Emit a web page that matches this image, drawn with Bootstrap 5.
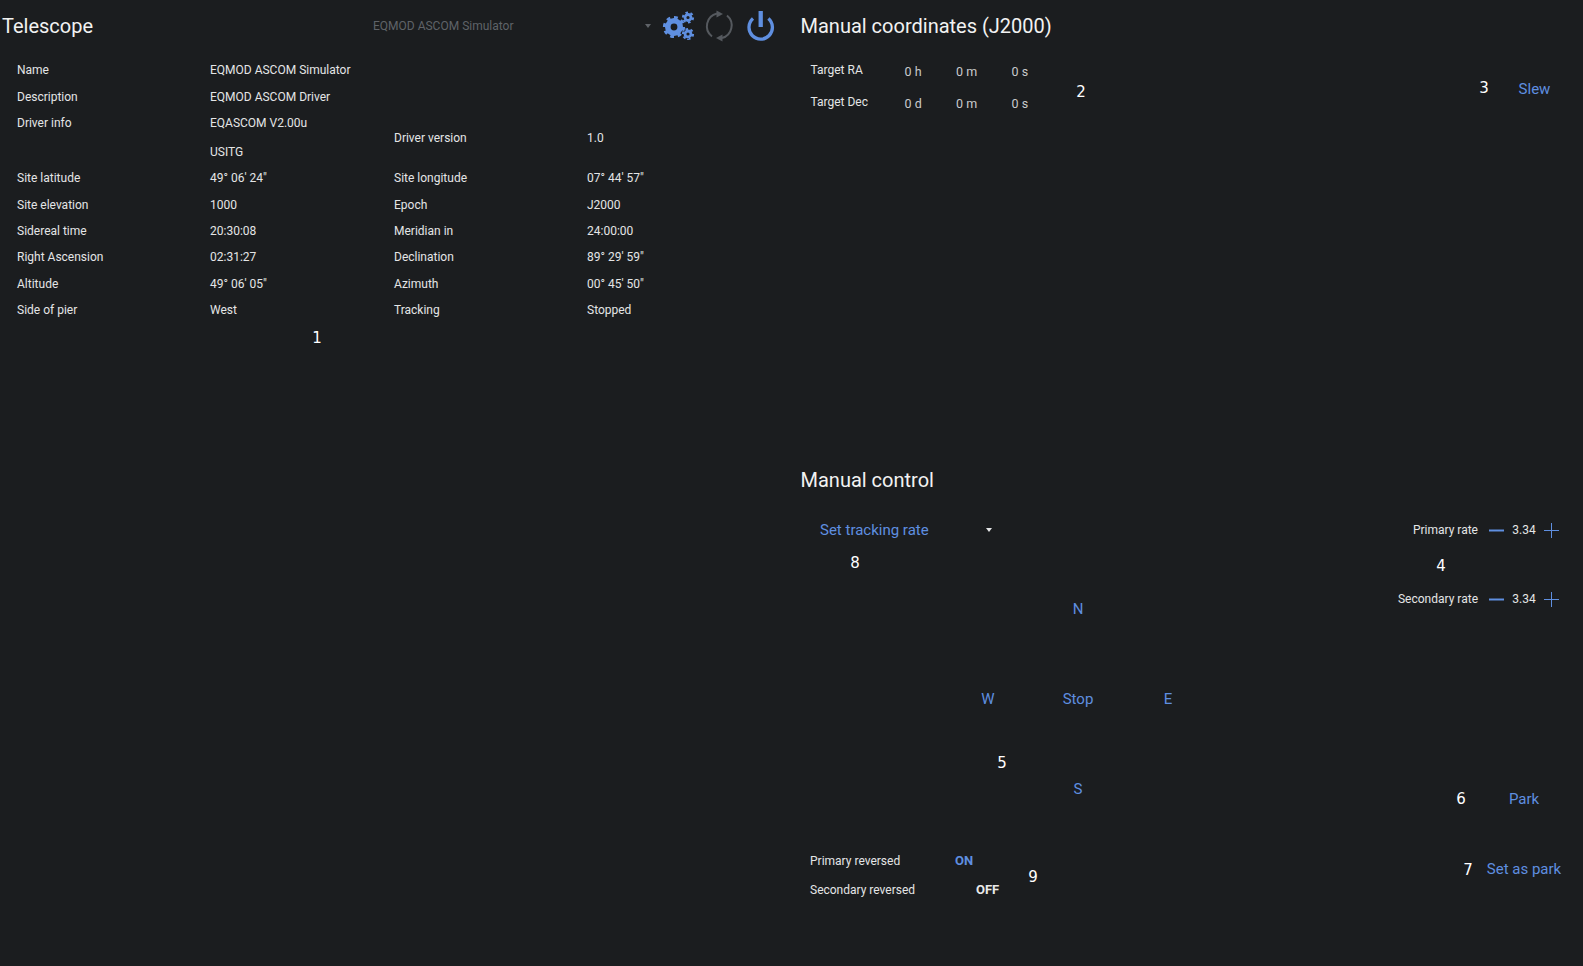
<!DOCTYPE html>
<html lang="en">
<head>
  <meta charset="UTF-8" />
  <meta name="viewport" content="width=device-width, initial-scale=1" />
  <title>Telescope</title>
  <link href="https://cdn.jsdelivr.net/npm/bootstrap@5.3.0/dist/css/bootstrap.min.css" rel="stylesheet" />
  <style>
    html, body {
      height: 100%;
      background: #1b1d1f;
      color: #e4e5e6;
      font-family: Roboto, "Liberation Sans", sans-serif;
      font-size: 12px;
    }

    .page-wrap {
      position: relative;
      width: 1583px;
      height: 966px;
      overflow: hidden;
    }

    .left-pane { width: 800px; }
    .right-pane { width: 783px; }
    .coords-pane { height: 454px; }
    .control-pane { height: 512px; }

    .head-row { height: 52px; }
    .pane-title {
      font-size: 20px;
      font-weight: 400;
      color: #f2f2f2;
      margin: 0;
      line-height: 52px;
    }
    .right-pane .pane-title { padding-left: 0.5px; }

    .scope-title { padding-left: 2px; width: 373px; }
    .scope-select { width: 278px; margin-right: 9px; color: #5f6368; }
    .select-caret {
      width: 0;
      height: 0;
      border-left: 3.5px solid transparent;
      border-right: 3.5px solid transparent;
      border-top: 4px solid currentColor;
    }

    .info-table {
      table-layout: fixed;
      width: 770px;
      margin: 4.8px 0 0 17px;
      --bs-table-bg: transparent;
      --bs-table-color: #e4e5e6;
    }
    .info-table td {
      padding: 0;
      height: 26.3px;
      vertical-align: middle;
      border: 0;
      background: transparent;
      color: #e4e5e6;
    }
    .info-table tr:first-child td { height: 27.1px; }
    .info-table .c-label { width: 193px; }
    .info-table .c-val { width: 184px; }
    .info-table .c-label2 { width: 193px; }
    .driver-line { height: 26px; line-height: 26px; }
    .driver-line + .driver-line { margin-top: 3px; }

    .target-form { padding: 5px 0 0 10.5px; }
    .target-row { height: 32px; }
    .target-row:first-child { height: 31px; }
    .target-label { width: 94px; position: relative; top: -2px; }
    .target-row:first-child .target-label { top: -3px; }
    .target-cell { color: #c9cacc; font-size: 12.5px; }
    .target-cell.w-a { width: 51.5px; }
    .target-cell.w-b { width: 55.5px; }

    .act-btn {
      --bs-btn-color: #5f8fe0;
      --bs-btn-hover-color: #5f8fe0;
      --bs-btn-active-color: #5f8fe0;
      --bs-btn-border-width: 0;
      --bs-btn-padding-x: 0;
      --bs-btn-padding-y: 0;
      --bs-btn-font-size: 15px;
      --bs-btn-font-weight: 400;
      --bs-btn-line-height: 21px;
      background: transparent;
    }

    .slew-slot { width: 60px; padding-top: 2px; }
    .coord-body { height: 72px; padding-right: 18.5px; }

    .rate-top-row { height: 48px; }
    .rate-link { width: 172px; margin-left: 20px; }
    .rate-caret { color: #e4e5e6; }
    .rate-row { height: 48px; padding-right: 24px; }
    .rate-row + .rate-row { margin-top: 21px; }
    .rate-name { margin-right: 11px; }
    .rate-val { width: 40px; text-align: center; }
    .rate-btn { width: 15px; height: 15px; display: block; }

    .jog-pad {
      display: grid;
      grid-template-columns: repeat(3, 90px);
      grid-template-rows: repeat(3, 90px);
      place-items: center;
      margin-left: 143px;
    }
    .jog-zone { padding-top: 10px; }

    .side-acts { width: 118px; margin-top: 165.5px; gap: 49.5px; }

    .rev-row { height: 29px; }
    .rev-label { width: 145px; }
    .state-on { color: #5f8fe0; font-weight: 700; font-size: 13px; }
    .state-off { color: #e9e9e9; font-weight: 700; font-size: 13px; margin-left: 21px; }
    .rev-zone { padding: 12px 0 0 10px; }

    .note-num {
      position: absolute;
      font-family: "DejaVu Sans", sans-serif;
      font-size: 15px;
      line-height: 20px;
      color: #fff;
      transform: translate(-50%, -50%);
    }
  </style>
</head>
<body>
  <div class="page-wrap d-flex">
    <!-- Telescope panel -->
    <section class="left-pane">
      <div class="head-row d-flex align-items-center">
        <h2 class="pane-title scope-title">Telescope</h2>
        <div class="scope-select d-flex align-items-center justify-content-between">
          <span>EQMOD ASCOM Simulator</span>
          <span class="select-caret"></span>
        </div>
        <svg width="120" height="52" viewBox="660 0 120 52" aria-hidden="true">
          <g fill="none" stroke="#5f8fe0">
            <circle cx="674" cy="27" r="6.2" stroke-width="5.6" />
            <circle cx="674" cy="27" r="9.4" stroke-width="3.4" pathLength="16" stroke-dasharray="1 1" />
            <circle cx="688" cy="17.5" r="3" stroke-width="2.8" />
            <circle cx="688" cy="17.5" r="5" stroke-width="2.2" pathLength="12" stroke-dasharray="1 1" />
            <circle cx="688" cy="34" r="3" stroke-width="2.8" />
            <circle cx="688" cy="34" r="5" stroke-width="2.2" pathLength="12" stroke-dasharray="1 1" />
          </g>
          <g fill="none" stroke="#55595e" stroke-width="2">
            <path d="M 712 36.5 A 13 13 0 0 1 717 13.5" />
            <path d="M 727 15.5 A 13 13 0 0 1 722 38" />
          </g>
          <path d="M 716.5 10.5 L 723 14 L 716.5 17.5 Z" fill="#55595e" />
          <path d="M 722.5 34.5 L 716 38 L 722.5 41.5 Z" fill="#55595e" />
          <g fill="none" stroke="#5f8fe0">
            <path d="M 753 18.6 A 11.7 11.7 0 1 0 768.4 18.6" stroke-width="3.3" />
            <path d="M 760.7 11 V 27" stroke-width="4.3" />
          </g>
        </svg>
      </div>
      <table class="table info-table mb-0">
        <colgroup>
          <col class="c-label" /><col class="c-val" /><col class="c-label2" /><col />
        </colgroup>
        <tbody>
          <tr><td>Name</td><td colspan="3">EQMOD ASCOM Simulator</td></tr>
          <tr><td>Description</td><td colspan="3">EQMOD ASCOM Driver</td></tr>
          <tr>
            <td class="align-top"><div class="driver-line">Driver info</div></td>
            <td><div class="driver-line">EQASCOM V2.00u</div><div class="driver-line">USITG</div></td>
            <td>Driver version</td><td>1.0</td>
          </tr>
          <tr><td>Site latitude</td><td>49° 06' 24"</td><td>Site longitude</td><td>07° 44' 57"</td></tr>
          <tr><td>Site elevation</td><td>1000</td><td>Epoch</td><td>J2000</td></tr>
          <tr><td>Sidereal time</td><td>20:30:08</td><td>Meridian in</td><td>24:00:00</td></tr>
          <tr><td>Right Ascension</td><td>02:31:27</td><td>Declination</td><td>89° 29' 59"</td></tr>
          <tr><td>Altitude</td><td>49° 06' 05"</td><td>Azimuth</td><td>00° 45' 50"</td></tr>
          <tr><td>Side of pier</td><td>West</td><td>Tracking</td><td>Stopped</td></tr>
        </tbody>
      </table>
    </section>

    <section class="right-pane d-flex flex-column">
      <!-- Manual coordinates -->
      <div class="coords-pane">
        <div class="head-row"><h2 class="pane-title">Manual coordinates (J2000)</h2></div>
        <div class="coord-body d-flex justify-content-between">
          <div class="target-form">
            <div class="target-row d-flex align-items-center">
              <span class="target-label">Target RA</span>
              <span class="target-cell w-a">0 h</span><span class="target-cell w-b">0 m</span><span class="target-cell">0 s</span>
            </div>
            <div class="target-row d-flex align-items-center">
              <span class="target-label">Target Dec</span>
              <span class="target-cell w-a">0 d</span><span class="target-cell w-b">0 m</span><span class="target-cell">0 s</span>
            </div>
          </div>
          <div class="slew-slot d-flex justify-content-center align-items-center">
            <button class="btn act-btn" type="button">Slew</button>
          </div>
        </div>
      </div>

      <!-- Manual control -->
      <div class="control-pane d-flex flex-column">
        <div class="head-row"><h2 class="pane-title">Manual control</h2></div>
        <div class="d-flex justify-content-between">
          <div class="flex-grow-1">
            <div class="d-flex align-items-center rate-top-row">
              <div class="rate-link d-flex align-items-center justify-content-between">
                <button class="btn act-btn" type="button">Set tracking rate</button>
                <span class="select-caret rate-caret"></span>
              </div>
            </div>
            <div class="jog-zone">
              <div class="jog-pad">
                <span></span><button class="btn act-btn" type="button">N</button><span></span>
                <button class="btn act-btn" type="button">W</button><button class="btn act-btn" type="button">Stop</button><button class="btn act-btn" type="button">E</button>
                <span></span><button class="btn act-btn" type="button">S</button><span></span>
              </div>
            </div>
            <div class="rev-zone">
              <div class="rev-row d-flex align-items-center"><span class="rev-label">Primary reversed</span><span class="state-on">ON</span></div>
              <div class="rev-row d-flex align-items-center"><span class="rev-label">Secondary reversed</span><span class="state-off">OFF</span></div>
            </div>
          </div>
          <div class="d-flex flex-column align-items-end flex-shrink-0">
            <div class="rate-row d-flex align-items-center">
              <span class="rate-name">Primary rate</span>
              <svg class="rate-btn" viewBox="0 0 15 15" aria-hidden="true"><path d="M0 7.5H15" stroke="#5f8fe0" stroke-width="2" /></svg>
              <span class="rate-val">3.34</span>
              <svg class="rate-btn" viewBox="0 0 15 15" aria-hidden="true"><path d="M0 7.5H15M7.5 0V15" stroke="#5f8fe0" stroke-width="1" /></svg>
            </div>
            <div class="rate-row d-flex align-items-center">
              <span class="rate-name">Secondary rate</span>
              <svg class="rate-btn" viewBox="0 0 15 15" aria-hidden="true"><path d="M0 7.5H15" stroke="#5f8fe0" stroke-width="2" /></svg>
              <span class="rate-val">3.34</span>
              <svg class="rate-btn" viewBox="0 0 15 15" aria-hidden="true"><path d="M0 7.5H15M7.5 0V15" stroke="#5f8fe0" stroke-width="1" /></svg>
            </div>
            <div class="side-acts d-flex flex-column align-items-center">
              <button class="btn act-btn" type="button">Park</button>
              <button class="btn act-btn" type="button">Set as park</button>
            </div>
          </div>
        </div>
      </div>
    </section>

    <!-- callout numbers lying over the panels -->
    <span class="note-num" style="left:317px;top:338px">1</span>
    <span class="note-num" style="left:1081px;top:92px">2</span>
    <span class="note-num" style="left:1484px;top:88px">3</span>
    <span class="note-num" style="left:1441px;top:566px">4</span>
    <span class="note-num" style="left:1002px;top:763px">5</span>
    <span class="note-num" style="left:1461px;top:799px">6</span>
    <span class="note-num" style="left:1468px;top:870px">7</span>
    <span class="note-num" style="left:855px;top:563px">8</span>
    <span class="note-num" style="left:1033px;top:877px">9</span>
  </div>

  <script src="https://cdn.jsdelivr.net/npm/bootstrap@5.3.0/dist/js/bootstrap.bundle.min.js"></script>
</body>
</html>
